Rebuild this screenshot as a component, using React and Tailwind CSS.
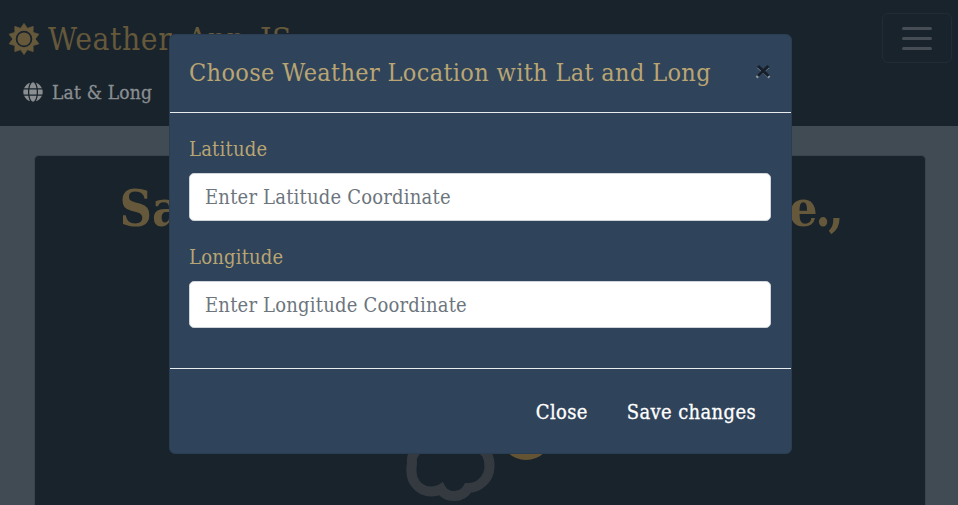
import React from "react";
import { FaGlobe } from "react-icons/fa";

// Ten-pointed star: even steps reach the tip radius, odd steps the valley radius.
const sunRays = Array.from({ length: 20 }, (_, i) => {
  const radius = i % 2 === 0 ? 15.6 : 11.2;
  const angle = (i * Math.PI) / 10;
  return `${(16 + radius * Math.sin(angle)).toFixed(2)},${(16 - radius * Math.cos(angle)).toFixed(2)}`;
}).join(" ");

function SunIcon() {
  return (
    <svg viewBox="0 0 32 32" className="h-8 w-8">
      <polygon points={sunRays} fill="#65583b" stroke="#65583b" strokeWidth="0.8" strokeLinejoin="round" />
      <circle cx="16" cy="16" r="7.400" fill="#65583b" stroke="#18232c" strokeWidth="1.700" />
    </svg>
  );
}

function Navbar() {
  return (
    <header className="h-[126px] bg-[#18232c]">
      <div className="flex items-start justify-between pl-2 pr-[6px] pt-[13px]">
        <a className="mt-[2px] flex items-center gap-2 text-[#65583b]">
          <SunIcon />
          <span className="whitespace-nowrap pt-px text-[31.5px] leading-[46px] tracking-[0.6px] [word-spacing:5px]">Weather App JS</span>
        </a>
        <button className="flex h-[50px] w-[70px] flex-col items-center justify-center gap-[7px] rounded-[6px] border border-[#212c36]">
          <span className="h-[3px] w-[30px] rounded-full bg-[#464d54]" />
          <span className="h-[3px] w-[30px] rounded-full bg-[#464d54]" />
          <span className="h-[3px] w-[30px] rounded-full bg-[#464d54]" />
        </button>
      </div>
      <a className="ml-[23px] mt-[14px] flex items-center gap-[9px] text-[#8b8e91]">
        <FaGlobe className="h-5 w-5" />
        <span className="whitespace-nowrap text-[19px] leading-[30px] tracking-[0.2px] [-webkit-text-stroke:0.3px]">Lat &amp; Long</span>
      </a>
    </header>
  );
}

function WeatherCard() {
  return (
    <main className="h-[379px] pl-[34px] pr-[32px] pt-[29px]">
      <section className="flex h-[350px] flex-col items-center justify-between rounded-t-[5px] border border-b-0 border-[#39444d] bg-[#18232c]">
        <h1 className="mr-[-1px] mt-[22px] flex w-[722px] justify-between whitespace-nowrap text-[50px] font-bold leading-[62px] text-[#65583b]">
          <span>San Jose,</span>
          <span className="tracking-[-2.5px]">Province.,</span>
        </h1>
        <svg viewBox="380 420 200 85" className="h-[85px] w-[200px]" fill="none">
          <circle cx="526" cy="434" r="26" fill="#655433" />
          <path
            d="M424 446C415 449 411 455 412 463C410 474 413 483 420 488C427 493 436 492 441 489C446 498 462 499 468 488C478 488 489 480 489.500 467C490 457 486 450 477 446"
            stroke="#353a41"
            strokeWidth="10"
          />
        </svg>
      </section>
    </main>
  );
}

function CoordinateField({ id, label, placeholder }) {
  return (
    <div>
      <label htmlFor={id} className="block pt-px text-[20px] leading-[30px] tracking-[0.2px] text-[#b9a573]">{label}</label>
      <input
        id={id}
        placeholder={placeholder}
        className="mt-[9px] block h-[47.5px] w-full rounded-[5px] border border-[#ced4da] bg-white px-[15px] pt-px text-[20px] tracking-[0.2px] text-[#6c757d] placeholder:text-[#6c757d] placeholder:opacity-100"
      />
    </div>
  );
}

function LocationModal() {
  return (
    <div role="dialog" className="absolute left-[169px] top-[34px] flex h-[420px] w-[623px] flex-col rounded-[6px] border border-[#2b3d52] bg-[#2f435a]">
      <div className="flex h-[78px] items-start justify-between border-b border-[#e9ecef] pl-[19px] pr-[20px] pt-[19px]">
        <h5 className="whitespace-nowrap text-[25px] leading-[38px] tracking-[0.35px] text-[#b9a573]">Choose Weather Location with Lat and Long</h5>
        <button aria-label="Close dialog" className="mt-[9px]">
          <svg viewBox="0 0 16 16" className="h-4 w-4" fill="none">
            <path d="M1.500 14.500L13.500 4M3 4L14.500 14.500" stroke="#8c98a5" strokeWidth="2.500" />
            <path d="M3 3L13.500 13M13.500 3L3 13" stroke="#17202a" strokeWidth="3" />
          </svg>
        </button>
      </div>
      <div className="flex h-[256px] flex-col gap-[20px] border-b border-[#e9ecef] pl-[19px] pr-[20px] pt-[20px]">
        <CoordinateField id="latitude" label="Latitude" placeholder="Enter Latitude Coordinate" />
        <CoordinateField id="longitude" label="Longitude" placeholder="Enter Longitude Coordinate" />
      </div>
      <div className="flex justify-end gap-[39px] pr-[35px] pt-[28px] text-[20px] leading-[30px] tracking-[0.35px] text-white [-webkit-text-stroke:0.3px]">
        <button>Close</button>
        <button>Save changes</button>
      </div>
    </div>
  );
}

export default function App() {
  return (
    <div className="relative h-[505px] w-[958px] overflow-hidden bg-[#414b54] font-['Roboto_Slab','DejaVu_Serif_Condensed','DejaVu_Serif',serif]">
      <Navbar />
      <WeatherCard />
      <LocationModal />
    </div>
  );
}
